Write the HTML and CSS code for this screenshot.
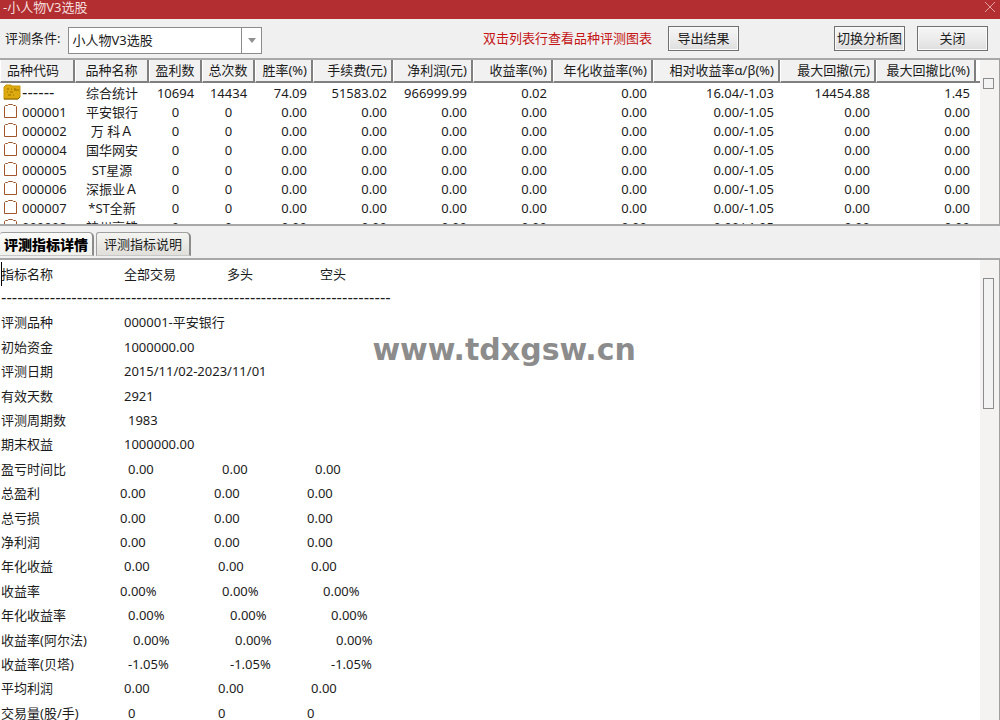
FILE: index.html
```html
<!DOCTYPE html>
<html lang="zh-CN">
  <head>
    <meta charset="UTF-8" />
    <meta name="viewport" content="width=device-width, initial-scale=1.0" />
    <title>小人物V3选股</title>
    <link rel="stylesheet" href="styles.css">
  </head>
  <body>
    <header class="titlebar">
      <span>-小人物V3选股</span>
      <button class="close" aria-label="关闭窗口">
        <svg width="12" height="12" viewBox="0 0 12 12"><path d="M1 1L11 11M11 1L1 11" stroke="#e0a0a0" fill="none" /></svg>
      </button>
    </header>

    <div class="toolbar">
      <label for="condition">评测条件:</label>
      <div class="combo">
        <select id="condition">
          <option>小人物V3选股</option>
        </select>
        <span class="arrow"><svg width="8" height="5" viewBox="0 0 8 5"><path d="M0 0H8L4 5Z" fill="#909090" /></svg></span>
      </div>
      <span class="hint">双击列表行查看品种评测图表</span>
      <button class="btn">导出结果</button>
      <button class="btn switch">切换分析图</button>
      <button class="btn">关闭</button>
    </div>

    <svg class="defs" width="0" height="0">
      <symbol id="doc" viewBox="0 0 16 16">
        <path d="M1.500 3.500L2.500 2.500H4.500L5.500 1.500H9.500L10.500 2.500H12.500L13.500 3.500V14.500H1.500Z" fill="#fff" stroke="#a0562a" />
      </symbol>
      <symbol id="book" viewBox="0 0 18 16">
        <path d="M1 3L3 1H8L9 2H17V13L15 15H1Z" fill="#dca90f" stroke="#c8980f" />
        <path d="M4 5H6M8 5H9M11 6H16M12 4V6M4 8H5M7 8H10M5 11H8M10 11H11" stroke="#9a7200" fill="none" />
        <path d="M1 15H15L17 13" stroke="#8a6400" fill="none" />
      </symbol>
    </svg>

    <section class="list">
      <div class="list-body">
        <table class="stocks">
          <colgroup>
            <col class="w-code"><col class="w-name"><col class="w-count"><col class="w-count">
            <col class="w-rate"><col class="w-money"><col class="w-money"><col class="w-money">
            <col class="w-year"><col class="w-rel"><col class="w-draw"><col class="w-year"><col>
          </colgroup>
          <thead>
            <tr>
              <th>品种代码</th><th>品种名称</th><th>盈利数</th><th>总次数</th><th>胜率(%)</th><th>手续费(元)</th><th>净利润(元)</th><th>收益率(%)</th><th>年化收益率(%)</th><th>相对收益率α/β(%)</th><th>最大回撤(元)</th><th>最大回撤比(%)</th><td></td>
            </tr>
          </thead>
          <tbody>
            <tr><td><svg class="book"><use href="#book" /></svg><span class="dashes">------</span></td><td>综合统计</td><td>10694</td><td>14434</td><td>74.09</td><td>51583.02</td><td>966999.99</td><td>0.02</td><td>0.00</td><td>16.04/-1.03</td><td>14454.88</td><td>1.45</td></tr>
            <tr><td><svg><use href="#doc" /></svg>000001</td><td>平安银行</td><td>0</td><td>0</td><td>0.00</td><td>0.00</td><td>0.00</td><td>0.00</td><td>0.00</td><td>0.00/-1.05</td><td>0.00</td><td>0.00</td></tr>
            <tr><td><svg><use href="#doc" /></svg>000002</td><td>万 科Ａ</td><td>0</td><td>0</td><td>0.00</td><td>0.00</td><td>0.00</td><td>0.00</td><td>0.00</td><td>0.00/-1.05</td><td>0.00</td><td>0.00</td></tr>
            <tr><td><svg><use href="#doc" /></svg>000004</td><td>国华网安</td><td>0</td><td>0</td><td>0.00</td><td>0.00</td><td>0.00</td><td>0.00</td><td>0.00</td><td>0.00/-1.05</td><td>0.00</td><td>0.00</td></tr>
            <tr><td><svg><use href="#doc" /></svg>000005</td><td>ST星源</td><td>0</td><td>0</td><td>0.00</td><td>0.00</td><td>0.00</td><td>0.00</td><td>0.00</td><td>0.00/-1.05</td><td>0.00</td><td>0.00</td></tr>
            <tr><td><svg><use href="#doc" /></svg>000006</td><td>深振业Ａ</td><td>0</td><td>0</td><td>0.00</td><td>0.00</td><td>0.00</td><td>0.00</td><td>0.00</td><td>0.00/-1.05</td><td>0.00</td><td>0.00</td></tr>
            <tr><td><svg><use href="#doc" /></svg>000007</td><td>*ST全新</td><td>0</td><td>0</td><td>0.00</td><td>0.00</td><td>0.00</td><td>0.00</td><td>0.00</td><td>0.00/-1.05</td><td>0.00</td><td>0.00</td></tr>
            <tr><td><svg><use href="#doc" /></svg>000008</td><td>神州高铁</td><td>0</td><td>0</td><td>0.00</td><td>0.00</td><td>0.00</td><td>0.00</td><td>0.00</td><td>0.00/-1.05</td><td>0.00</td><td>0.00</td></tr>
          </tbody>
        </table>
      </div>
      <div class="scrollbar"><div class="thumb"></div></div>
    </section>

    <nav class="tabs">
      <button class="tab active">评测指标详情</button>
      <button class="tab">评测指标说明</button>
    </nav>

    <section class="detail">
      <div class="detail-body">
        <table class="report">
          <thead>
            <tr><th>指标名称</th><th>全部交易</th><th>多头</th><th>空头</th></tr>
          </thead>
          <tbody>
            <tr><td class="dashes" colspan="4">------------------------------------------------------------------------</td></tr>
            <tr class="in1"><td>评测品种</td><td colspan="3">000001-平安银行</td></tr>
            <tr class="in1"><td>初始资金</td><td colspan="3">1000000.00</td></tr>
            <tr class="in1"><td>评测日期</td><td colspan="3">2015/11/02-2023/11/01</td></tr>
            <tr class="in1"><td>有效天数</td><td colspan="3">2921</td></tr>
            <tr class="in2"><td>评测周期数</td><td colspan="3">1983</td></tr>
            <tr class="in1"><td>期末权益</td><td colspan="3">1000000.00</td></tr>
            <tr class="in2"><td>盈亏时间比</td><td>0.00</td><td>0.00</td><td>0.00</td></tr>
            <tr><td>总盈利</td><td>0.00</td><td>0.00</td><td>0.00</td></tr>
            <tr><td>总亏损</td><td>0.00</td><td>0.00</td><td>0.00</td></tr>
            <tr><td>净利润</td><td>0.00</td><td>0.00</td><td>0.00</td></tr>
            <tr class="in1"><td>年化收益</td><td>0.00</td><td>0.00</td><td>0.00</td></tr>
            <tr class="pct"><td>收益率</td><td>0.00%</td><td>0.00%</td><td>0.00%</td></tr>
            <tr class="in2 pct"><td>年化收益率</td><td>0.00%</td><td>0.00%</td><td>0.00%</td></tr>
            <tr class="in3 pct"><td>收益率(阿尔法)</td><td>0.00%</td><td>0.00%</td><td>0.00%</td></tr>
            <tr class="in2 pct"><td>收益率(贝塔)</td><td>-1.05%</td><td>-1.05%</td><td>-1.05%</td></tr>
            <tr class="in1"><td>平均利润</td><td>0.00</td><td>0.00</td><td>0.00</td></tr>
            <tr class="in2 whole"><td>交易量(股/手)</td><td>0</td><td>0</td><td>0</td></tr>
          </tbody>
        </table>
        <div class="caret"></div>
        <div class="watermark">www.tdxgsw.cn</div>
      </div>
      <div class="scrollbar"><div class="thumb long"></div></div>
    </section>
  </body>
</html>
```
FILE: styles.css
```css
* {
  box-sizing: border-box;
}
body {
  margin: 0;
  height: 100vh;
  display: flex;
  flex-direction: column;
  overflow: hidden;
  background: #f0f0f0;
  color: #1c1c1c;
}
body,
button,
select {
  font-family: "Noto Sans", "Noto Sans CJK SC", sans-serif;
  font-size: 13px;
  line-height: 19px;
}
button,
select {
  color: #1c1c1c;
}
.defs {
  position: absolute;
}
.dashes {
  font-family: "DejaVu Sans", sans-serif;
  font-size: 15px;
}

.titlebar {
  flex: none;
  display: flex;
  justify-content: space-between;
  height: 19px;
  padding: 0 4px 0 3px;
  background: #b22e30;
  color: #f3dcdc;
  line-height: 15px;
}
.close {
  display: flex;
  padding: 1px 0;
  border: 0;
  background: none;
}

.toolbar {
  flex: none;
  display: flex;
  align-items: center;
  height: 39px;
  padding: 0 12px 1px 5px;
}
.combo {
  display: flex;
  width: 194px;
  height: 27px;
  margin: 5px auto 0 8px;
  border: 1px solid #8c8c8c;
  background: #fff;
}
.combo select {
  flex: 1;
  padding: 0 3px;
  border: 0;
  background: none;
  appearance: none;
}
.arrow {
  display: flex;
  align-items: center;
  justify-content: center;
  width: 20px;
  border-left: 1px solid #8c8c8c;
}
.hint {
  margin-right: 16px;
  color: #c41414;
}
.btn {
  width: 71px;
  height: 25px;
  padding: 0;
  border: 1px solid #707070;
  background: linear-gradient(#f6f6f6, #ececec 50%, #dedede);
  box-shadow: inset 0 0 0 1px #fafafa;
  white-space: nowrap;
}
.btn.switch {
  margin: 0 12px 0 95px;
}

.list {
  flex: none;
  display: flex;
  height: 168px;
  border-top: 2px solid #a8a8a8;
  border-bottom: 2px solid #a8a8a8;
  border-right: 1px solid #a0a0a0;
  background: #fff;
}
.list-body {
  flex: 1;
  overflow: hidden;
}
.stocks {
  width: 100%;
  table-layout: fixed;
  border-collapse: separate;
  border-spacing: 0;
}
.w-code { width: 75px; }
.w-name { width: 74px; }
.w-count { width: 53px; }
.w-rate { width: 58px; }
.w-money { width: 80px; }
.w-year { width: 100px; }
.w-rel { width: 127px; }
.w-draw { width: 96px; }
.stocks th,
.stocks td {
  padding: 0 6px 0 0;
  text-align: right;
  white-space: nowrap;
}
.stocks thead th,
.stocks thead td {
  height: 23px;
  border-bottom: 2px solid #808080;
}
.stocks th {
  font-weight: normal;
  border-left: 1px solid #fff;
  border-right: 2px solid #808080;
  padding-right: 4px;
  background: #f1f1f1;
}
.stocks tbody td {
  height: 19px;
}
.stocks tbody tr:nth-child(4n+1) td {
  height: 20px;
}
.stocks th:first-child {
  padding-left: 6px;
  text-align: left;
}
.stocks td:first-child {
  padding-left: 3px;
  text-align: left;
}
.stocks th:nth-child(2),
.stocks th:nth-child(3),
.stocks th:nth-child(4),
.stocks td:nth-child(2),
.stocks td:nth-child(3),
.stocks td:nth-child(4) {
  padding: 0;
  text-align: center;
}
.stocks svg {
  width: 16px;
  height: 16px;
  margin-right: 3px;
  vertical-align: top;
}
.stocks .dashes {
  display: inline-block;
  height: 19px;
  vertical-align: top;
}
.stocks svg.book {
  width: 18px;
  margin-right: 1px;
}

.scrollbar {
  flex: none;
  width: 19px;
  padding: 18px 5px 0 3px;
  background: #f4f3f1;
}
.thumb {
  height: 11px;
  border: 1px solid #8c8c8c;
  background: #f3f3f3;
}
.thumb.long {
  height: 131px;
}

.tabs {
  flex: none;
  display: flex;
  gap: 2px;
  height: 32px;
  padding-top: 6px;
}
.tab {
  width: 95px;
  height: 24px;
  padding: 0;
  border: 1px solid #a0a0a0;
  border-right: 2px solid #8c8c8c;
  border-bottom-color: #c8c8c8;
  border-radius: 3px 5px 0 0;
  background: linear-gradient(#f4f4f1, #e0dfda);
  white-space: nowrap;
}
.tab.active {
  width: 94px;
  border-left: 0;
  background: linear-gradient(#fafaf8, #f1f1ec);
  color: #000;
  font-size: 14px;
  font-weight: 900;
}

.detail {
  flex: 1;
  min-height: 0;
  display: flex;
  border-top: 2px solid #a8a8a8;
  border-right: 1px solid #a0a0a0;
  background: #fff;
}
.detail-body {
  position: relative;
  flex: 1;
  overflow: hidden;
  padding-top: 2px;
}
.report {
  table-layout: fixed;
  width: 400px;
  border-collapse: collapse;
}
.report tr {
  --indent: 0px;
  --drift: 0px;
  height: 24px;
}
/* two lines in five are a pixel taller */
.report tbody tr:nth-child(5n+2),
.report tbody tr:nth-child(5n+4) {
  height: 25px;
}
.report .in1 { --indent: 4px; }
.report .in2 { --indent: 8px; }
.report .in3 { --indent: 13px; }
.report .pct { --drift: 8px; }
.report .whole { --drift: -4px; }
.report th,
.report td {
  padding: 0;
  font-weight: normal;
  text-align: left;
  white-space: nowrap;
}
.report th:nth-child(1) { width: 120px; }
.report th:nth-child(2) { width: 94px; }
.report th:nth-child(3) { width: 93px; }
.report td:first-child,
.report th:first-child {
  padding-left: 1px;
}
.report td:nth-child(2) {
  padding-left: var(--indent);
}
.report td:nth-child(3) {
  padding-left: calc(var(--indent) + var(--drift));
}
.report td:nth-child(4) {
  padding-left: calc(var(--indent) + 2 * var(--drift));
}
.report th:nth-child(2) { padding-left: 4px; }
.report th:nth-child(3),
.report th:nth-child(4) { padding-left: 13px; }
.caret {
  position: absolute;
  top: 2px;
  left: 1px;
  width: 1px;
  height: 24px;
  background: #000;
}
.watermark {
  position: absolute;
  top: 71px;
  left: 38%;
  color: #8c8c8c;
  font: bold 30px/38px "DejaVu Sans", sans-serif;
}
```
